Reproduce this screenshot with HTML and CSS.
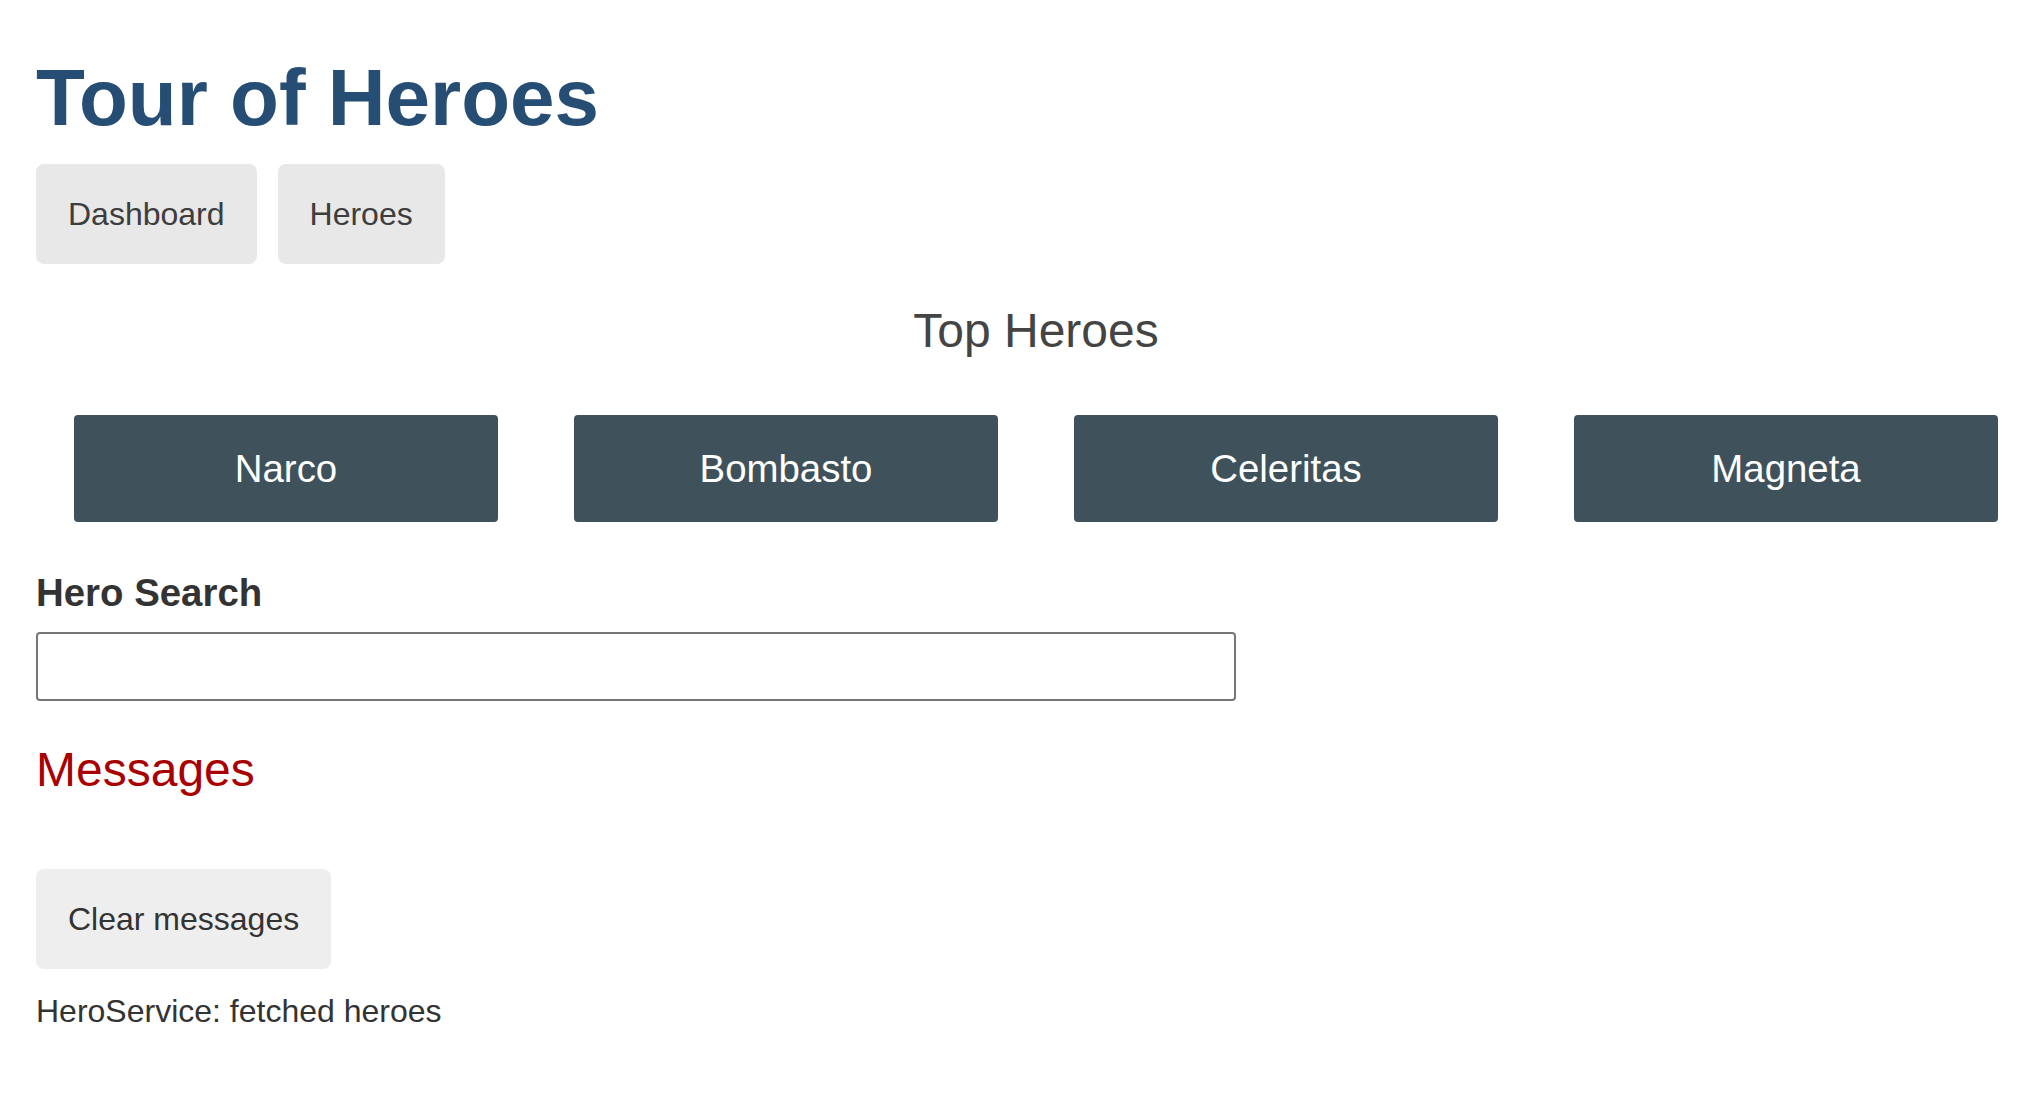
FILE: index.html
```
<!DOCTYPE html>
<html lang="en">
<head>
<meta charset="utf-8">
<title>Tour of Heroes</title>
<link rel="stylesheet" href="styles.css">
</head>
<body>
<div class="app">
  <h1 class="title">Tour of Heroes</h1>
  <nav class="nav">
    <a class="nav-link" href="#">Dashboard</a>
    <a class="nav-link" href="#">Heroes</a>
  </nav>
  <h2 class="top-heading">Top Heroes</h2>
  <div class="heroes-menu">
    <a class="hero" href="#">Narco</a>
    <a class="hero" href="#">Bombasto</a>
    <a class="hero" href="#">Celeritas</a>
    <a class="hero" href="#">Magneta</a>
  </div>
  <div class="search">
    <label class="search-label" for="search-box">Hero Search</label>
    <input class="search-box" id="search-box" type="text">
  </div>
  <div class="messages">
    <h2 class="messages-heading">Messages</h2>
    <button class="clear" type="button">Clear messages</button>
    <div class="message">HeroService: fetched heroes</div>
  </div>
</div>
</body>
</html>
```
FILE: styles.css
```
html, body {
  margin: 0;
  padding: 0;
  background: #fff;
}
body {
  font-family: "Liberation Sans", Arial, Helvetica, sans-serif;
  color: #333;
}
.app {
  width: 2000px;
  margin-left: 36px;
}
.title {
  margin: 52px 0 0;
  font-size: 80px;
  line-height: 92px;
  font-weight: bold;
  color: #264D73;
}
.nav {
  display: flex;
  gap: 21px;
  margin-top: 20px;
}
.nav-link {
  display: block;
  padding: 32px;
  font-size: 32px;
  line-height: 36px;
  text-decoration: none;
  background-color: #e8e8e8;
  color: #3d3d3d;
  border-radius: 8px;
}
.top-heading {
  margin: 39px 0 41px;
  text-align: center;
  font-size: 48px;
  line-height: 55px;
  font-weight: normal;
  color: #444;
}
.heroes-menu {
  display: flex;
  justify-content: space-around;
  align-items: flex-start;
}
.hero {
  display: block;
  width: 18%;
  box-sizing: content-box;
  padding: 32px;
  margin: 16px 0;
  font-size: 38.4px;
  line-height: 43px;
  text-align: center;
  text-decoration: none;
  color: #fff;
  background-color: #3f525c;
  border-radius: 4px;
}
.search {
  margin-top: 32px;
}
.search-label {
  display: block;
  font-weight: bold;
  font-size: 38.4px;
  line-height: 46px;
  margin-bottom: 16px;
  color: #333;
}
.search-box {
  display: block;
  box-sizing: border-box;
  width: 1200px;
  height: 69px;
  padding: 16px;
  margin: 0;
  font-family: "Liberation Sans", Arial, Helvetica, sans-serif;
  font-size: 26.67px;
  color: #333;
  background: #fff;
  border: 2px solid #767676;
  border-radius: 4px;
}
.messages-heading {
  margin: 40.5px 0 0;
  font-size: 48px;
  line-height: 55px;
  font-weight: normal;
  color: #A80000;
}
.clear {
  display: block;
  margin: 72px 0 24px;
  padding: 32px;
  border: none;
  border-radius: 8px;
  background-color: #eee;
  color: #333;
  font-family: "Liberation Sans", Arial, Helvetica, sans-serif;
  font-size: 32px;
  line-height: 36px;
}
.message {
  font-size: 32px;
  line-height: 36.8px;
  color: #333;
}
```
